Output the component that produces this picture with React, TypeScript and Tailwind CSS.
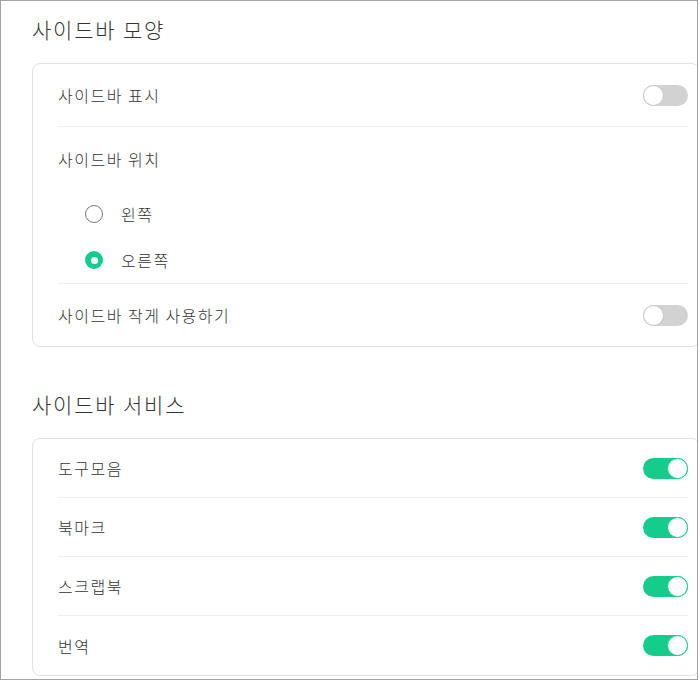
const font = { fontFamily: '"Noto Sans CJK KR", "Noto Sans", sans-serif' };

const Toggle = ({ on }: { on: boolean }) => (
  <div className={`relative h-[21px] w-[45px] rounded-full ${on ? "bg-[#14cd8c]" : "bg-[#d2d2d2]"}`}>
    <div
      className={
        on
          ? "absolute right-0 top-0 h-[21px] w-[21px] rounded-full border border-[#14cd8c] bg-white"
          : "absolute left-0 top-0 h-[21px] w-[21px] rounded-full border border-[#c6c6c6] bg-white"
      }
    />
  </div>
);

const label = "text-[16px] font-light tracking-[1.5px] text-[#333]";
const title = "text-[21px] font-light leading-[28px] tracking-[1.8px] text-[#333]";

const Radio = ({ checked, text }: { checked: boolean; text: string }) => (
  <div className="flex h-[46px] items-center">
    {checked ? (
      <div className="ml-[27px] flex h-[18px] w-[18px] items-center justify-center rounded-full bg-[#14cd8c]">
        <div className="h-[7px] w-[7px] rounded-full bg-white" />
      </div>
    ) : (
      <div className="ml-[27px] h-[18px] w-[18px] rounded-full border border-[#777] bg-white" />
    )}
    <span className={`ml-[18px] ${label}`}>{text}</span>
  </div>
);

const services = ["도구모음", "북마크", "스크랩북", "번역"];

export default function App() {
  return (
    <div className="h-[681px] w-[700px] bg-white" style={font}>
      <div className="h-[680px] w-[698px] overflow-hidden border border-[#a3a3a3] pl-[31px] pt-[14px]">
        <h2 className={title}>사이드바 모양</h2>

        <div className="mt-[20px] w-[668px] rounded-lg border border-[#e2e2e2] pl-[25px] pr-[11px]">
          <div className="flex h-[63px] items-center justify-between border-b border-[#efefef]">
            <span className={label}>사이드바 표시</span>
            <Toggle on={false} />
          </div>
          <div className="border-b border-[#efefef] pt-[21px]">
            <div className={`${label} leading-[22px]`}>사이드바 위치</div>
            <div className="mt-[21px]">
              <Radio checked={false} text="왼쪽" />
              <Radio checked text="오른쪽" />
            </div>
          </div>
          <div className="flex h-[62px] items-center justify-between">
            <span className={label}>사이드바 작게 사용하기</span>
            <Toggle on={false} />
          </div>
        </div>

        <h2 className={`mt-[43px] ${title}`}>사이드바 서비스</h2>

        <div className="mt-[20px] w-[668px] rounded-lg border border-[#e2e2e2] pl-[25px] pr-[11px]">
          {services.map((s, i) => (
            <div
              key={s}
              className={`flex h-[59px] items-center justify-between ${i < services.length - 1 ? "border-b border-[#efefef]" : ""}`}
            >
              <span className={label}>{s}</span>
              <Toggle on />
            </div>
          ))}
        </div>
      </div>
    </div>
  );
}
